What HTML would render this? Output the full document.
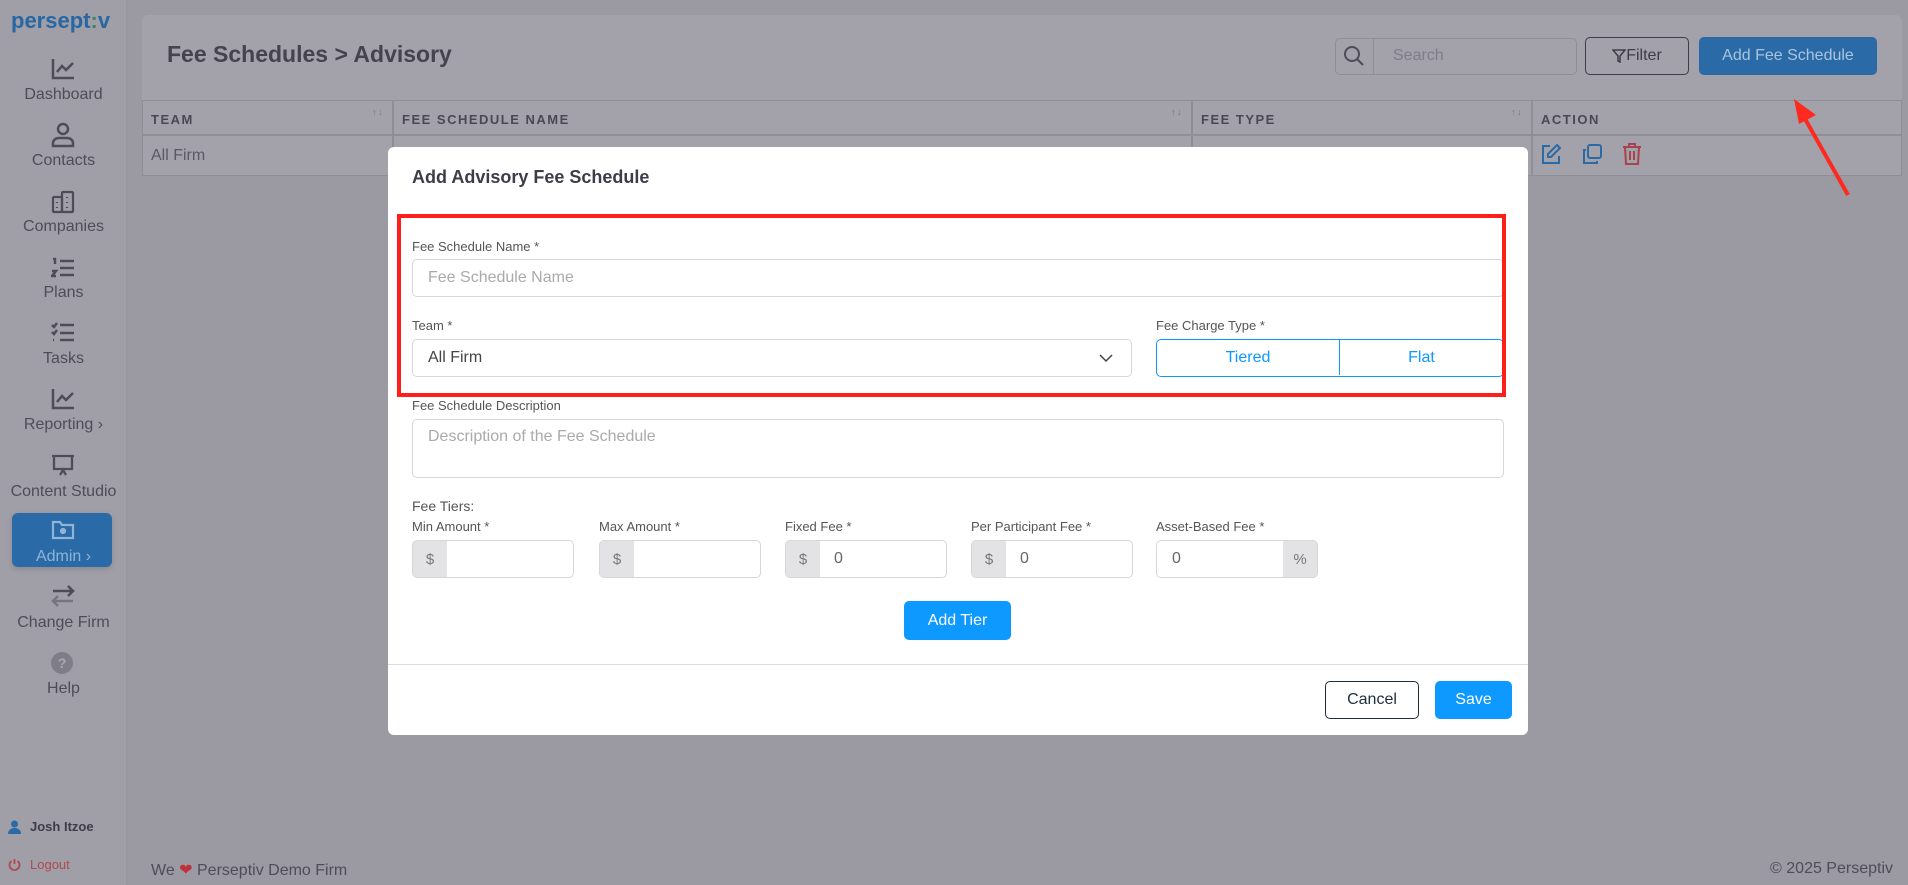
<!DOCTYPE html>
<html><head><meta charset="utf-8"><style>
*{box-sizing:border-box;margin:0;padding:0}
body{width:1908px;height:885px;overflow:hidden;background:#9b99a2;font-family:"Liberation Sans",sans-serif;position:relative;color:#4a4854}
.a{position:absolute}
.side{left:0;top:0;width:127px;height:885px;background:#a09ea7;border-right:1px solid #97959e}
.nav{position:absolute;left:0;width:127px;text-align:center;font-size:16px;color:#4e4c58}
.ic{position:absolute;left:50%;transform:translateX(-50%)}
.card{left:142px;top:15px;width:1760px;height:161px;background:#a3a1aa;border-radius:6px}
.th{position:absolute;top:100px;height:35px;border:1px solid #8f8d96;font-size:13px;font-weight:bold;letter-spacing:1.5px;color:#4a4854;padding:11px 8px}
.td{position:absolute;top:135px;height:41px;border:1px solid #8f8d96;font-size:16px;padding:11px 8px}
.modal{left:388px;top:147px;width:1140px;height:588px;background:#fff;border-radius:6px}
.lbl{position:absolute;font-size:13px;color:#555}
.inp{position:absolute;border:1px solid #d6d6d6;border-radius:5px;background:#fff;font-size:16px;color:#aaa;padding:0 15px;display:flex;align-items:center}
.pre{position:absolute;top:0;bottom:0;width:34px;background:#e3e3e6;color:#777;display:flex;align-items:center;justify-content:center;font-size:15px}
</style></head><body>
<div class="a side">
 <div class="a" style="left:11px;top:8px;font-size:22px;font-weight:bold;color:#2767a3">persept<span style="color:#3a8a6a">:</span>v</div>
 <svg class="a" style="left:51px;top:58px" width="24" height="22" viewBox="0 0 24 22" fill="none" stroke="#4e4c58" stroke-width="2.5"><path d="M2 1v19h21M6 14l5-6 4 4 7-7"/></svg>
 <div class="nav" style="top:86px">Dashboard</div>
 <svg class="a" style="left:51px;top:122px" width="24" height="26" viewBox="0 0 24 26" fill="none" stroke="#4e4c58" stroke-width="2.5"><circle cx="12" cy="7" r="5"/><path d="M2 24v-3c0-3 3-5 6-5h8c3 0 6 2 6 5v3z"/></svg>
 <div class="nav" style="top:152px">Contacts</div>
 <svg class="a" style="left:51px;top:190px" width="24" height="24" viewBox="0 0 24 24" fill="none" stroke="#4e4c58" stroke-width="2.2"><rect x="2" y="7" width="9" height="15" rx="1"/><rect x="11" y="2" width="11" height="20" rx="1"/><path d="M6 12v1M6 17v1M16 7v1M16 12v1M16 17v1"/></svg>
 <div class="nav" style="top:218px">Companies</div>
 <svg class="a" style="left:51px;top:257px" width="24" height="22" viewBox="0 0 24 22" fill="none" stroke="#4e4c58" stroke-width="2.5"><path d="M9 4h14M9 11h14M9 18h14M2 2h2v5M1 14h4l-4 5h4"/></svg>
 <div class="nav" style="top:284px">Plans</div>
 <svg class="a" style="left:51px;top:322px" width="24" height="22" viewBox="0 0 24 22" fill="none" stroke="#4e4c58" stroke-width="2.5"><path d="M9 3h14M9 11h14M9 18h14M1 3l2 2 3-4M1 10l2 2 3-4M2 18h1"/></svg>
 <div class="nav" style="top:350px">Tasks</div>
 <svg class="a" style="left:51px;top:388px" width="24" height="22" viewBox="0 0 24 22" fill="none" stroke="#4e4c58" stroke-width="2.5"><path d="M2 1v19h21M6 14l5-6 4 4 7-7"/></svg>
 <div class="nav" style="top:416px">Reporting &rsaquo;</div>
 <svg class="a" style="left:51px;top:454px" width="24" height="24" viewBox="0 0 24 24" fill="none" stroke="#4e4c58" stroke-width="2.3"><path d="M1 2h22M3 3v12h18V3M9 21l3-5 3 5"/></svg>
 <div class="nav" style="top:483px">Content Studio</div>
 <div class="a" style="left:12px;top:513px;width:100px;height:54px;background:#2a6aa6;border-radius:6px;box-shadow:0 2px 6px rgba(0,0,0,.15)"></div>
 <svg class="a" style="left:51px;top:520px" width="24" height="20" viewBox="0 0 24 20" fill="none" stroke="#8fb4d8" stroke-width="2.2"><path d="M2 2h7l2 3h11v13H2z"/><circle cx="12" cy="11" r="2" fill="#8fb4d8"/></svg>
 <div class="nav" style="top:548px;color:#8fb4d8">Admin &rsaquo;</div>
 <svg class="a" style="left:51px;top:585px" width="24" height="22" viewBox="0 0 24 22" fill="none" stroke="#4e4c58" stroke-width="2.5"><path d="M2 6h20M17 1l5 5-5 5"/><path d="M22 16H2M7 11l-5 5 5 5" stroke="#77757f"/></svg>
 <div class="nav" style="top:614px">Change Firm</div>
 <div class="a" style="left:51px;top:652px;width:22px;height:22px;border-radius:50%;background:#7f7d87;color:#aaa8b0;font-size:14px;font-weight:bold;text-align:center;line-height:22px">?</div>
 <div class="nav" style="top:680px">Help</div>
 <svg class="a" style="left:8px;top:820px" width="13" height="14" viewBox="0 0 13 14" fill="#2a6aa6"><circle cx="6.5" cy="4" r="3.5"/><path d="M0 14c0-4 3-6 6.5-6s6.5 2 6.5 6z"/></svg>
 <div class="a" style="left:30px;top:819px;font-size:13px;font-weight:bold;color:#3e3c48">Josh Itzoe</div>
 <svg class="a" style="left:8px;top:858px" width="13" height="13" viewBox="0 0 13 13" fill="none" stroke="#b04a52" stroke-width="1.8"><path d="M3.5 3a5 5 0 1 0 6 0M6.5 1v5"/></svg>
 <div class="a" style="left:30px;top:857px;font-size:13px;color:#b04a52">Logout</div>
</div>
<div class="a card"></div>
<div class="a" style="left:167px;top:41px;font-size:23px;font-weight:bold;color:#45434f">Fee Schedules &gt; Advisory</div>
<div class="a" style="left:1335px;top:38px;width:242px;height:37px;border:1px solid #8f8d96;border-radius:5px"></div>
<div class="a" style="left:1373px;top:38px;width:1px;height:37px;background:#8f8d96"></div>
<svg class="a" style="left:1343px;top:45px" width="22" height="22" viewBox="0 0 22 22" fill="none" stroke="#4e4c58" stroke-width="2"><circle cx="9" cy="9" r="7"/><path d="M14 14l6 6"/></svg>
<div class="a" style="left:1393px;top:47px;font-size:16px;color:#7e7c86">Search</div>
<div class="a" style="left:1585px;top:37px;width:104px;height:38px;border:1.5px solid #3e3c48;border-radius:5px;font-size:16px;color:#3e3c48;display:flex;align-items:center;justify-content:center">
<svg width="14" height="14" viewBox="0 0 14 14" fill="none" stroke="#3e3c48" stroke-width="1.5"><path d="M1 1h12L8 7v6L6 12V7z"/></svg>Filter</div>
<div class="a" style="left:1699px;top:37px;width:178px;height:38px;background:#2a6aa6;border-radius:5px;font-size:16px;color:#a9c4de;display:flex;align-items:center;justify-content:center">Add Fee Schedule</div>
<div class="th" style="left:142px;width:251px">TEAM<span style="position:absolute;right:8px;top:6px;font-size:9px;color:#777">↑↓</span></div>
<div class="th" style="left:393px;width:799px">FEE SCHEDULE NAME<span style="position:absolute;right:8px;top:6px;font-size:9px;color:#777">↑↓</span></div>
<div class="th" style="left:1192px;width:340px">FEE TYPE<span style="position:absolute;right:8px;top:6px;font-size:9px;color:#777">↑↓</span></div>
<div class="th" style="left:1532px;width:370px">ACTION</div>
<div class="td" style="left:142px;width:251px;color:#5a5864">All Firm</div>
<div class="td" style="left:393px;width:799px"></div>
<div class="td" style="left:1192px;width:340px"></div>
<div class="td" style="left:1532px;width:370px"></div>
<svg class="a" style="left:1540px;top:143px" width="22" height="22" viewBox="0 0 22 22" fill="none" stroke="#2a6aa6" stroke-width="2"><path d="M10 3H3v17h16v-7M17 2l3 3-9 9H8v-3z"/></svg>
<svg class="a" style="left:1581px;top:143px" width="22" height="22" viewBox="0 0 22 22" fill="none" stroke="#2a6aa6" stroke-width="2"><rect x="7" y="2" width="13" height="13" rx="2"/><path d="M5 7H3v13h13v-2"/></svg>
<svg class="a" style="left:1622px;top:142px" width="20" height="23" viewBox="0 0 20 23" fill="none" stroke="#a8444c" stroke-width="2"><path d="M1 5h18M7 5V2h6v3M3 5l1 17h12l1-17M8 9v9M12 9v9"/></svg>
<svg class="a" style="left:1785px;top:92px" width="70" height="110" viewBox="0 0 70 110"><path d="M63 103L15 18" stroke="#ff2a1f" stroke-width="4"/><path d="M9 7l22 16-17 9z" fill="#ff2a1f"/></svg>

<div class="a modal">
 <div class="a" style="left:24px;top:20px;font-size:18px;font-weight:bold;color:#3e3c48">Add Advisory Fee Schedule</div>
 <div class="lbl" style="left:24px;top:92px">Fee Schedule Name *</div>
 <div class="inp" style="left:24px;top:112px;width:1092px;height:38px">Fee Schedule Name</div>
 <div class="lbl" style="left:24px;top:171px">Team *</div>
 <div class="inp" style="left:24px;top:192px;width:720px;height:38px;color:#444">All Firm
  <svg style="position:absolute;right:18px;top:14px" width="14" height="9" viewBox="0 0 14 9" fill="none" stroke="#444" stroke-width="1.5"><path d="M1 1l6 6 6-6"/></svg></div>
 <div class="lbl" style="left:768px;top:171px">Fee Charge Type *</div>
 <div class="a" style="left:768px;top:192px;width:348px;height:38px;border:1.5px solid #0d99ff;border-radius:5px;color:#0d99ff;font-size:16px">
  <div class="a" style="left:0;top:0;width:183px;height:35px;border-right:1.5px solid #0d99ff;display:flex;align-items:center;justify-content:center">Tiered</div>
  <div class="a" style="left:183px;top:0;width:163px;height:35px;display:flex;align-items:center;justify-content:center">Flat</div>
 </div>
 <div class="a" style="left:9px;top:67px;width:1109px;height:183px;border:4px solid #ff1f1a"></div>
 <div class="lbl" style="left:24px;top:251px">Fee Schedule Description</div>
 <div class="inp" style="left:24px;top:272px;width:1092px;height:59px;align-items:flex-start;padding-top:8px">Description of the Fee Schedule</div>
 <div class="lbl" style="left:24px;top:351px;font-size:14px">Fee Tiers:</div>
 <div class="lbl" style="left:24px;top:372px">Min Amount *</div>
 <div class="lbl" style="left:211px;top:372px">Max Amount *</div>
 <div class="lbl" style="left:397px;top:372px">Fixed Fee *</div>
 <div class="lbl" style="left:583px;top:372px">Per Participant Fee *</div>
 <div class="lbl" style="left:768px;top:372px">Asset-Based Fee *</div>
 <div class="inp" style="left:24px;top:393px;width:162px;height:38px;overflow:hidden"><div class="pre" style="left:0">$</div></div>
 <div class="inp" style="left:211px;top:393px;width:162px;height:38px;overflow:hidden"><div class="pre" style="left:0">$</div></div>
 <div class="inp" style="left:397px;top:393px;width:162px;height:38px;overflow:hidden;padding-left:48px;color:#666"><div class="pre" style="left:0">$</div>0</div>
 <div class="inp" style="left:583px;top:393px;width:162px;height:38px;overflow:hidden;padding-left:48px;color:#666"><div class="pre" style="left:0">$</div>0</div>
 <div class="inp" style="left:768px;top:393px;width:162px;height:38px;overflow:hidden;color:#666">0<div class="pre" style="right:0">%</div></div>
 <div class="a" style="left:516px;top:454px;width:107px;height:39px;background:#0d99ff;border-radius:5px;color:#fff;font-size:16px;display:flex;align-items:center;justify-content:center">Add Tier</div>
 <div class="a" style="left:0;top:517px;width:1140px;height:1px;background:#dcdcdc"></div>
 <div class="a" style="left:937px;top:534px;width:94px;height:38px;border:1.5px solid #1f2d3d;border-radius:5px;color:#1f2d3d;font-size:16px;display:flex;align-items:center;justify-content:center">Cancel</div>
 <div class="a" style="left:1047px;top:534px;width:77px;height:38px;background:#0d99ff;border-radius:5px;color:#fff;font-size:16px;display:flex;align-items:center;justify-content:center">Save</div>
</div>
<div class="a" style="left:151px;top:860px;font-size:16px;color:#4e4c58">We <span style="color:#c0303a">&#10084;</span> Perseptiv Demo Firm</div>
<div class="a" style="right:15px;top:860px;font-size:16px;color:#4e4c58">© 2025 Perseptiv</div>
</body></html>
